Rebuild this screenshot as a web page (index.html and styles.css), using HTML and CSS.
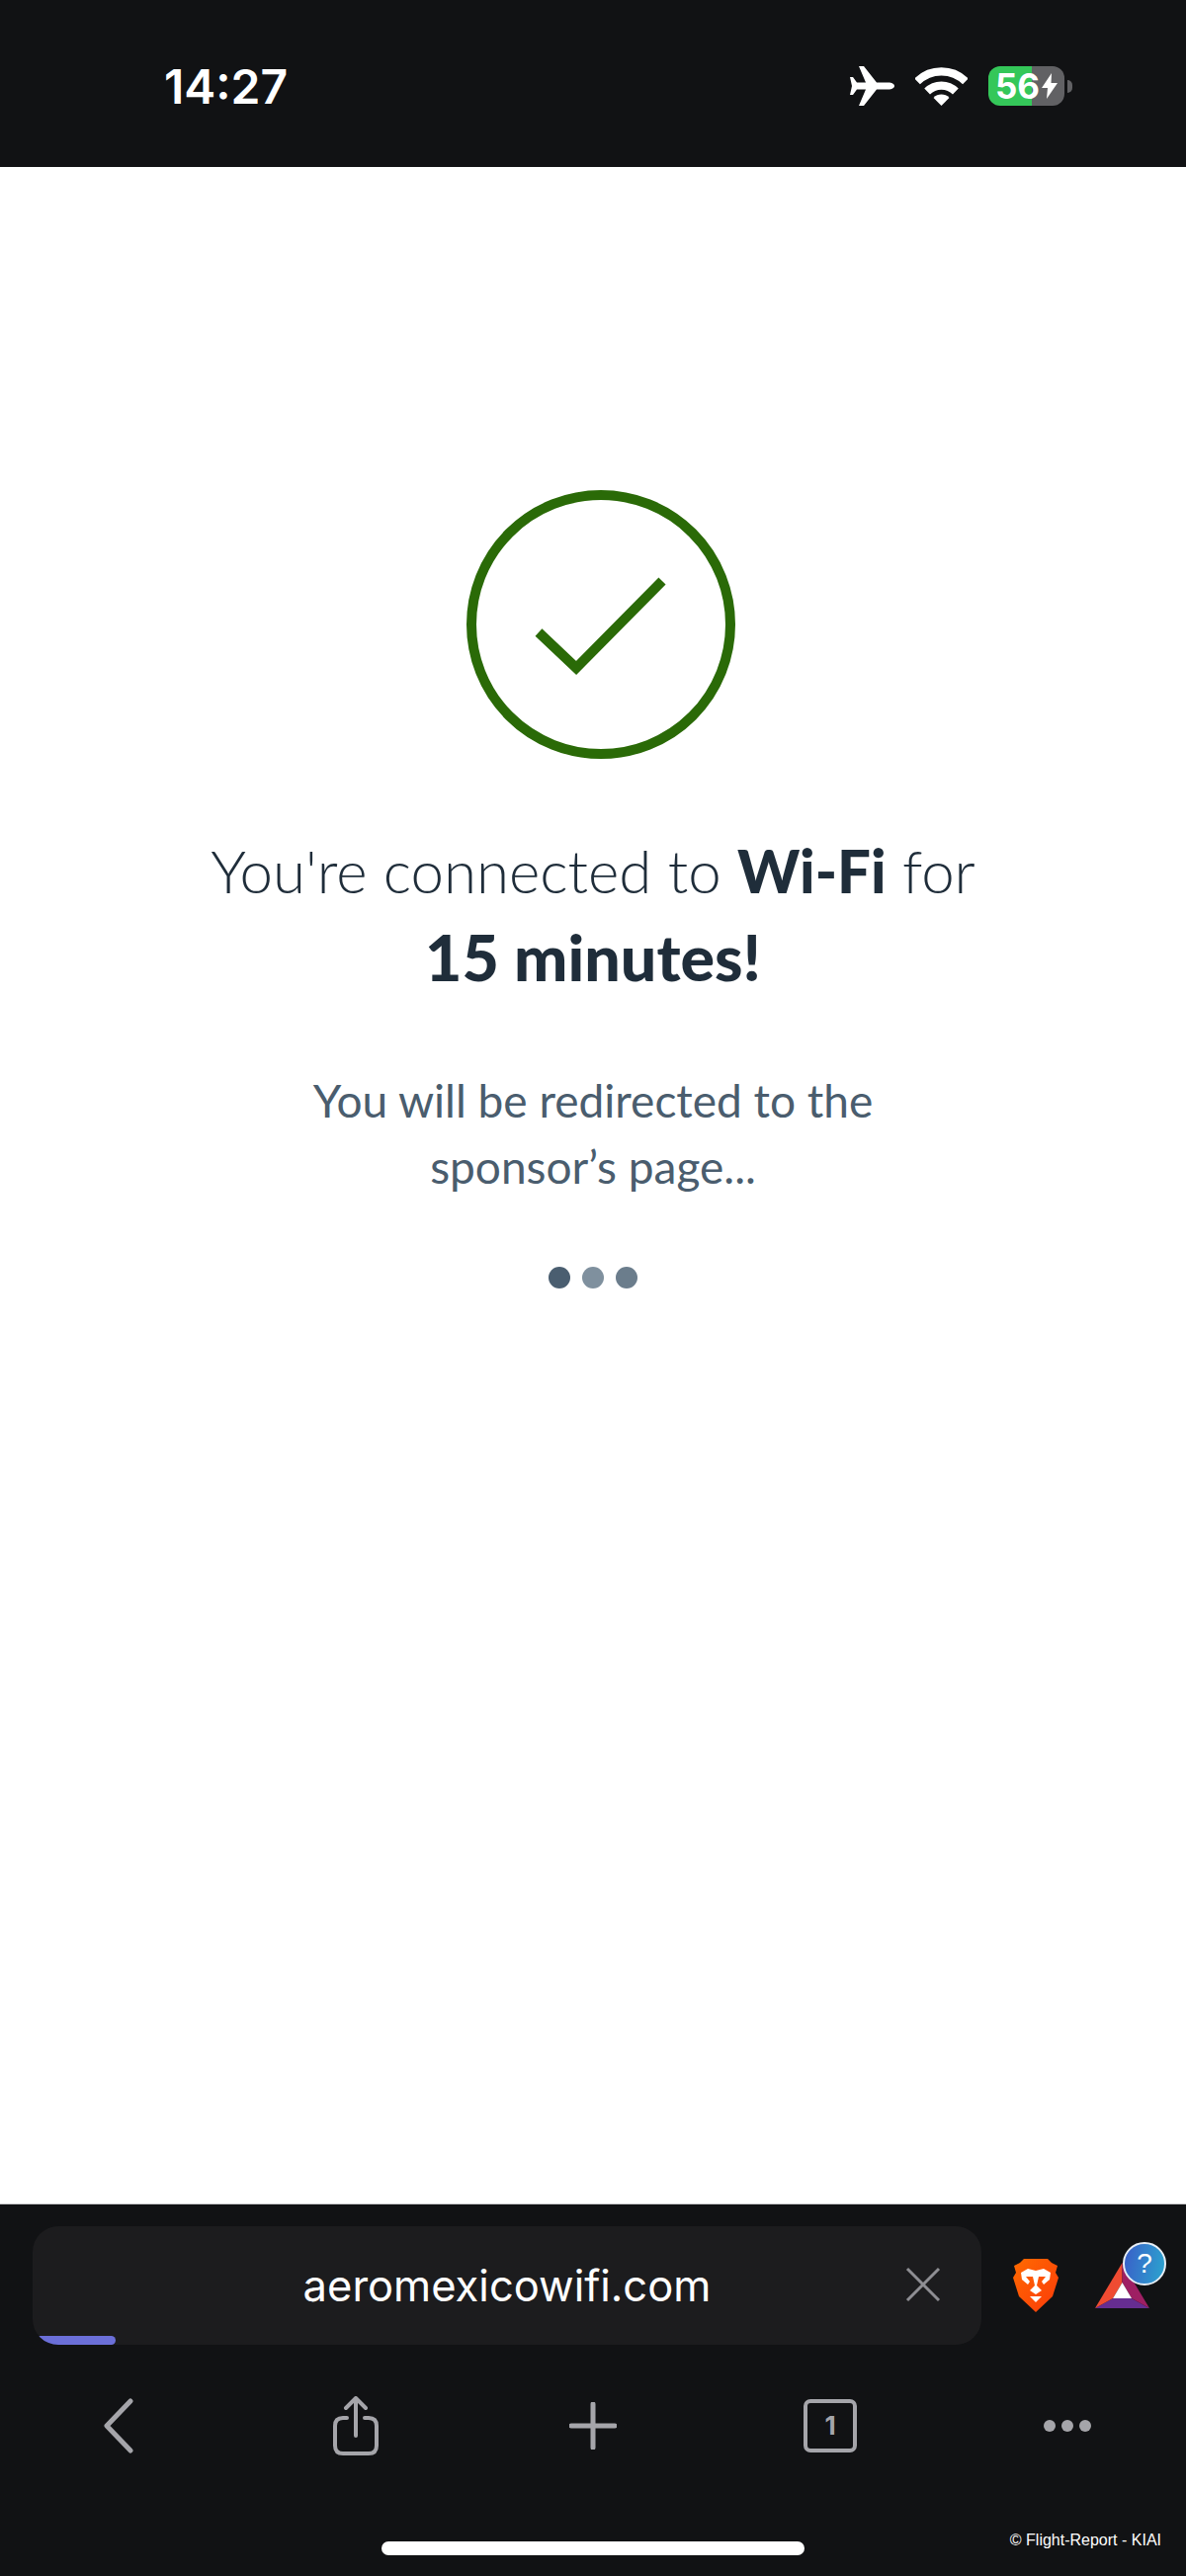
FILE: index.html
```html
<!DOCTYPE html>
<html lang="en">
<head>
<meta charset="utf-8">
<title>Aeromexico Wi-Fi</title>
<link rel="stylesheet" href="styles.css">
</head>
<body>
<div class="phone">
  <header class="status">
    <span class="time">14:27</span>
    <div class="status-icons">
      <svg class="plane" viewBox="0 0 45 40"><path d="M45 20c0-2-3-3.5-6-3.5H27L14 0H9l7 16.5H7L3 11H0l2 9-2 9h3l4-5.500h9L9 40h5l13-16.500h12c3 0 6-1.500 6-3.500z"/></svg>
      <svg class="wifi" viewBox="0 0 52 39">
        <path class="arc" d="M2 15A34 34 0 0 1 50 15"/>
        <path class="arc" d="M11.900 24.900A20 20 0 0 1 40.100 24.900"/>
        <path class="wedge" d="M26 39L18.200 31.200A11 11 0 0 1 33.800 31.200Z"/>
      </svg>
      <div class="battery-wrap">
        <div class="battery">
          <span class="battery-level">56</span>
          <svg class="bolt" viewBox="0 0 16 26"><path d="M10 0L0 15h6L5 26l11-16H9.500z"/></svg>
        </div>
        <span class="battery-cap"></span>
      </div>
    </div>
  </header>

  <main class="content">
    <svg class="check" viewBox="0 0 272 272">
      <circle cx="136" cy="136" r="131"/>
      <path d="M73 144L111 180L198 92"/>
    </svg>
    <h1 class="headline">You're connected to <b>Wi-Fi</b> for<br><b class="duration">15 minutes!</b></h1>
    <p class="redirect">You will be redirected to the<br>sponsor’s page...</p>
    <div class="dots">
      <span class="dot dot-a"></span>
      <span class="dot dot-b"></span>
      <span class="dot dot-c"></span>
    </div>
  </main>

  <footer class="browser">
    <div class="address-row">
      <div class="address">
        <span class="url">aeromexicowifi.com</span>
        <svg class="close" viewBox="0 0 36 36"><path d="M2 2L34 34M34 2L2 34"/></svg>
        <span class="progress"></span>
      </div>
      <svg class="brave" viewBox="0 0 46 55">
        <defs>
          <linearGradient id="braveFill" x1="0" y1="0" x2="1" y2="1">
            <stop offset="0" stop-color="#ff6a00"/>
            <stop offset="1" stop-color="#fb3a0a"/>
          </linearGradient>
        </defs>
        <path fill="url(#braveFill)" d="M11 1H35L39 5L45 8L43 15L46 20L40 39L23 55L6 39L0 20L3 15L1 8L7 5Z"/>
        <path fill="#fff" d="M8 15L15 11L23 13L31 11L38 15L37 22L31 27L29 24L33 19L26 19L24 28L29 33L23 37L17 33L22 28L20 19L13 19L17 24L15 27L9 22Z"/>
        <path fill="#fff" d="M17 39H29L23 45Z"/>
      </svg>
      <div class="bat">
        <svg class="bat-logo" viewBox="0 0 55 46">
          <path fill="#662d91" d="M0 46L18 36H37L55 46Z"/>
          <path fill="#ef4b32" d="M27.500 0L0 46L18 36L27.500 20Z"/>
          <path fill="#9e1f63" d="M27.500 0L55 46L37 36L27.500 20Z"/>
          <path fill="#fff" d="M27.500 20L37 36H18Z"/>
        </svg>
        <span class="badge">?</span>
      </div>
    </div>
    <nav class="toolbar">
      <svg class="tool back" viewBox="0 0 30 56"><path d="M27 3L3 28L27 53"/></svg>
      <svg class="tool share" viewBox="0 0 46 60"><path d="M14 22H10Q2 22 2 30V50Q2 58 10 58H36Q44 58 44 50V30Q44 22 36 22H32M23 40V3M13 12L23 2L33 12"/></svg>
      <svg class="tool plus" viewBox="0 0 48 48"><path d="M24 2V46M2 24H46"/></svg>
      <div class="tabs">1</div>
      <div class="more"><span></span><span></span><span></span></div>
    </nav>
    <div class="home-row">
      <span class="home"></span>
      <span class="credit">© Flight-Report - KIAI</span>
    </div>
  </footer>
</div>
</body>
</html>
```

FILE: styles.css
```css
* { box-sizing: border-box; }
html, body { margin: 0; padding: 0; }
body { background: #fff; }

.phone {
  width: 1200px;
  height: 2607px;
  display: flex;
  flex-direction: column;
  overflow: hidden;
}

/* Status bar */
.status {
  height: 169px;
  background: #111214;
  color: #fff;
  display: flex;
  align-items: flex-start;
  justify-content: space-between;
  padding: 60px 115px 0 166px;
}
.time {
  font-family: Inter, "Liberation Sans", sans-serif;
  font-weight: 600;
  font-size: 48px;
  line-height: 56px;
}
.status-icons { display: flex; align-items: center; gap: 21px; padding-top: 7px; }
.plane { width: 45px; height: 40px; fill: #fff; display: block; }
.wifi { width: 53px; height: 40px; display: block; }
.wifi .arc { fill: none; stroke: #fff; stroke-width: 8; }
.wifi .wedge { fill: #fff; }
.battery-wrap { display: flex; align-items: center; gap: 3px; }
.battery {
  width: 77px;
  height: 40px;
  border-radius: 12px;
  background: linear-gradient(90deg, #34c759 57%, #616164 57%);
  display: flex;
  align-items: center;
  padding-left: 7px;
  gap: 2px;
}
.battery-level {
  font-family: Inter, "Liberation Sans", sans-serif;
  font-weight: 700;
  font-size: 35px;
  line-height: 40px;
  color: #fff;
}
.bolt { width: 16px; height: 26px; fill: #fff; display: block; }
.battery-cap { width: 5px; height: 13px; background: #616164; border-radius: 0 5px 5px 0; }

/* Content */
.content {
  flex: 1;
  background: #fff;
  display: flex;
  flex-direction: column;
  align-items: center;
  padding-top: 327px;
}
.check { width: 272px; height: 272px; display: block; margin-left: 16px; }
.check circle, .check path { fill: none; stroke: #2a6a07; stroke-width: 10; }
.headline {
  margin: 70px 0 0;
  text-align: center;
  font-family: Lato, "Open Sans", sans-serif;
  font-weight: 300;
  font-size: 60px;
  line-height: 87px;
  color: #1f2d3a;
}
.headline b { font-weight: 900; }
.headline .duration { font-size: 64.500px; }
.redirect {
  margin: 66px 0 0;
  text-align: center;
  font-family: Lato, "Open Sans", sans-serif;
  font-weight: 400;
  font-size: 46px;
  line-height: 67px;
  color: #4a5d6e;
}
.dots { display: flex; gap: 12px; margin-top: 68px; }
.dot { width: 22px; height: 22px; border-radius: 50%; }
.dot-a { background: #4a5e70; }
.dot-b { background: #7f909e; }
.dot-c { background: #6b7d8c; }

/* Browser chrome */
.browser {
  height: 377px;
  background: #111214;
  border-top: 1px solid #c9c9cb;
  display: flex;
  flex-direction: column;
}
.address-row {
  display: flex;
  align-items: flex-start;
  padding: 22px 0 0 33px;
}
.address {
  position: relative;
  overflow: hidden;
  width: 960px;
  height: 120px;
  background: #1c1c1e;
  border-radius: 26px;
  display: flex;
  align-items: center;
  justify-content: center;
}
.url {
  font-family: Inter, "Liberation Sans", sans-serif;
  font-size: 43.500px;
  line-height: 52px;
  color: #fff;
}
.close {
  position: absolute;
  right: 41px;
  top: 41px;
  width: 36px;
  height: 36px;
  fill: none;
  stroke: #8e8e93;
  stroke-width: 3;
}
.progress {
  position: absolute;
  left: 0;
  bottom: 0;
  width: 84px;
  height: 9px;
  background: #6b6fd8;
  border-radius: 0 5px 5px 0;
}
.brave { width: 46px; height: 55px; display: block; margin: 32px 0 0 32px; }
.bat { position: relative; width: 55px; height: 46px; margin: 37px 0 0 37px; }
.bat-logo { width: 55px; height: 46px; display: block; }
.badge {
  position: absolute;
  left: 28px;
  top: -21px;
  width: 44px;
  height: 44px;
  border-radius: 50%;
  border: 2px solid #e8eef5;
  background: linear-gradient(100deg, #3a5ec8, #2ba5cf);
  color: #fff;
  font-family: "Liberation Sans", sans-serif;
  font-size: 28px;
  font-weight: 400;
  line-height: 40px;
  text-align: center;
}
.toolbar {
  display: grid;
  grid-template-columns: repeat(5, 240px);
  justify-items: center;
  align-items: center;
  height: 64px;
  margin-top: 50px;
}
.tool { display: block; fill: none; stroke: #a5a5aa; stroke-linecap: round; stroke-linejoin: round; }
.back { width: 30px; height: 56px; stroke-width: 5; }
.share { width: 46px; height: 60px; stroke-width: 4; }
.plus { width: 48px; height: 48px; stroke-width: 5; }
.tabs {
  width: 54px;
  height: 54px;
  border: 4px solid #a5a5aa;
  border-radius: 7px;
  color: #a5a5aa;
  font-family: Inter, "Liberation Sans", sans-serif;
  font-weight: 700;
  font-size: 26px;
  line-height: 46px;
  text-align: center;
}
.more { display: flex; gap: 6px; }
.more span { width: 12px; height: 12px; border-radius: 50%; background: #a5a5aa; }
.home-row {
  position: relative;
  display: flex;
  justify-content: center;
  margin-top: 85px;
}
.home { width: 428px; height: 14px; border-radius: 7px; background: #fff; }
.credit {
  position: absolute;
  right: 25px;
  top: -11px;
  font-family: "Liberation Sans", sans-serif;
  font-size: 16px;
  line-height: 20px;
  color: #fff;
}
```
